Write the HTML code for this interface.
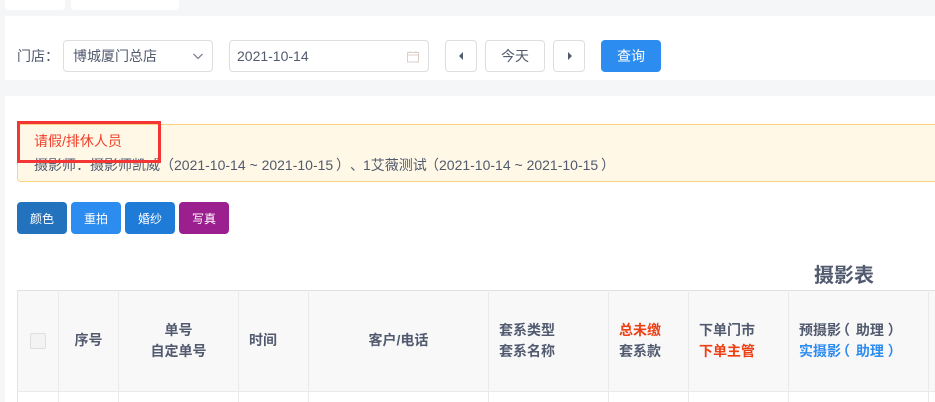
<!DOCTYPE html>
<html lang="zh">
<head>
<meta charset="utf-8">
<style>
html,body{margin:0;padding:0;width:935px;height:402px;overflow:hidden;background:#f5f6f8;}
body{position:relative;font-family:"Liberation Sans","Noto Sans CJK SC",sans-serif;font-size:14px;color:#515a6e;}
div{position:absolute;box-sizing:border-box;white-space:nowrap;}
.w{background:#fff;}
.bx{border:1px solid #dcdee2;border-radius:4px;background:#fff;height:32px;top:40px;line-height:30px;}
.btn{top:202px;width:50px;height:32px;border-radius:4px;color:#fff;font-size:12px;line-height:34px;text-align:center;}
.v{top:290px;width:1px;height:112px;background:#e8eaec;}
.t{font-weight:700;font-size:14px;line-height:21px;color:#515a6e;}
.c{text-align:center;}
.r{color:#ed3f14;}
.b{color:#2d8cf0;}
.tc{font-family:"Noto Sans CJK TC",sans-serif;}
.lp{margin-left:-5px;margin-right:2px;}
.l2{top:156px;font-size:14px;line-height:19px;}
</style>
</head>
<body>
<div class="w" style="left:5px;top:0;width:60px;height:10px;border-radius:0 0 3px 3px;"></div>
<div class="w" style="left:71px;top:0;width:108px;height:10px;border-radius:0 0 3px 3px;"></div>
<div class="w" style="left:5px;top:16px;width:930px;height:64px;"></div>
<div class="w" style="left:5px;top:96px;width:930px;height:306px;"></div>

<div style="left:17px;top:46px;line-height:20px;">门店<span class="tc">：</span></div>
<div class="bx" style="left:63px;width:150px;padding-left:9px;">博城厦门总店
<svg style="position:absolute;left:128px;top:11px" width="12" height="9" viewBox="0 0 12 9"><path d="M1.5 2 L6 6.5 L10.5 2" fill="none" stroke="#808695" stroke-width="1.3"/></svg></div>
<div class="bx" style="left:229px;width:200px;padding-left:7px;">2021-10-14
<svg style="position:absolute;left:176px;top:9px" width="14" height="13" viewBox="0 0 14 13"><path d="M1.5 2.5H12.5V12H1.5ZM1.5 5H12.5M4 1V3M10 1V3" fill="none" stroke="#dccfc8" stroke-width="1"/></svg></div>
<div class="bx" style="left:445px;width:32px;">
<svg style="position:absolute;left:12px;top:10px" width="6" height="10" viewBox="0 0 6 10"><path d="M5 1V9L1 5Z" fill="#515a6e"/></svg></div>
<div class="bx c" style="left:485px;width:60px;">今天</div>
<div class="bx" style="left:553px;width:32px;">
<svg style="position:absolute;left:13px;top:10px" width="6" height="10" viewBox="0 0 6 10"><path d="M1 1V9L5 5Z" fill="#515a6e"/></svg></div>
<div class="c" style="left:601px;top:40px;width:60px;height:32px;border-radius:4px;background:#2d8cf0;color:#fff;line-height:32px;">查询</div>

<div style="left:17px;top:124px;width:940px;height:58px;border:1px solid #fdd27f;border-radius:4px;background:#fff8e6;"></div>
<div class="r" style="left:34px;top:132px;font-size:14px;line-height:19px;color:#f0402c;">请假/排休人员</div>
<div class="l2" style="left:34px;">摄影师<span class="tc">：</span>摄影师凯威</div>
<div class="l2" style="left:160px;">（</div>
<div class="l2" style="left:174px;">2021-10-14 ~ 2021-10-15</div>
<div class="l2" style="left:336px;">）</div>
<div class="l2" style="left:350px;">、</div>
<div class="l2" style="left:363px;">1艾薇测试</div>
<div class="l2" style="left:425px;">（</div>
<div class="l2" style="left:439px;">2021-10-14 ~ 2021-10-15</div>
<div class="l2" style="left:601px;">）</div>
<div style="left:17px;top:121px;width:144px;height:42px;border:3px solid #f33535;"></div>

<div class="btn" style="left:17px;background:#2272bd;">颜色</div>
<div class="btn" style="left:71px;background:#2d8cf0;">重拍</div>
<div class="btn" style="left:125px;background:#1f7bd8;">婚纱</div>
<div class="btn" style="left:179px;background:#9b1f8e;">写真</div>

<div style="left:814px;top:263px;font-size:20px;line-height:26px;font-weight:700;">摄影表</div>

<div style="left:17px;top:290px;width:918px;height:102px;background:#f8f8f9;border-top:1px solid #dfdfe1;border-bottom:1px solid #e8eaec;"></div>
<div class="v" style="left:17px;background:#e2e3e5;"></div>
<div class="v" style="left:58px;"></div>
<div class="v" style="left:118px;"></div>
<div class="v" style="left:238px;"></div>
<div class="v" style="left:308px;"></div>
<div class="v" style="left:488px;"></div>
<div class="v" style="left:608px;"></div>
<div class="v" style="left:688px;"></div>
<div class="v" style="left:788px;"></div>
<div class="v" style="left:928px;"></div>

<div style="left:30px;top:333px;width:16px;height:16px;border:1px solid #dcdee2;border-radius:2px;background:#f3f3f3;"></div>
<div class="t c" style="left:59px;top:330px;width:59px;">序号</div>
<div class="t c" style="left:119px;top:320px;width:119px;">单号<br>自定单号</div>
<div class="t" style="left:249px;top:330px;">时间</div>
<div class="t c" style="left:309px;top:330px;width:179px;">客户/电话</div>
<div class="t" style="left:499px;top:320px;">套系类型<br>套系名称</div>
<div class="t" style="left:619px;top:320px;"><span class="r">总未缴</span><br>套系款</div>
<div class="t" style="left:699px;top:320px;">下单门市<br><span class="r">下单主管</span></div>
<div class="t" style="left:799px;top:320px;">预摄影<span class="lp">（</span> 助理 ）<br><span class="b">实摄影<span class="lp">（</span> 助理 ）</span></div>
</body>
</html>
